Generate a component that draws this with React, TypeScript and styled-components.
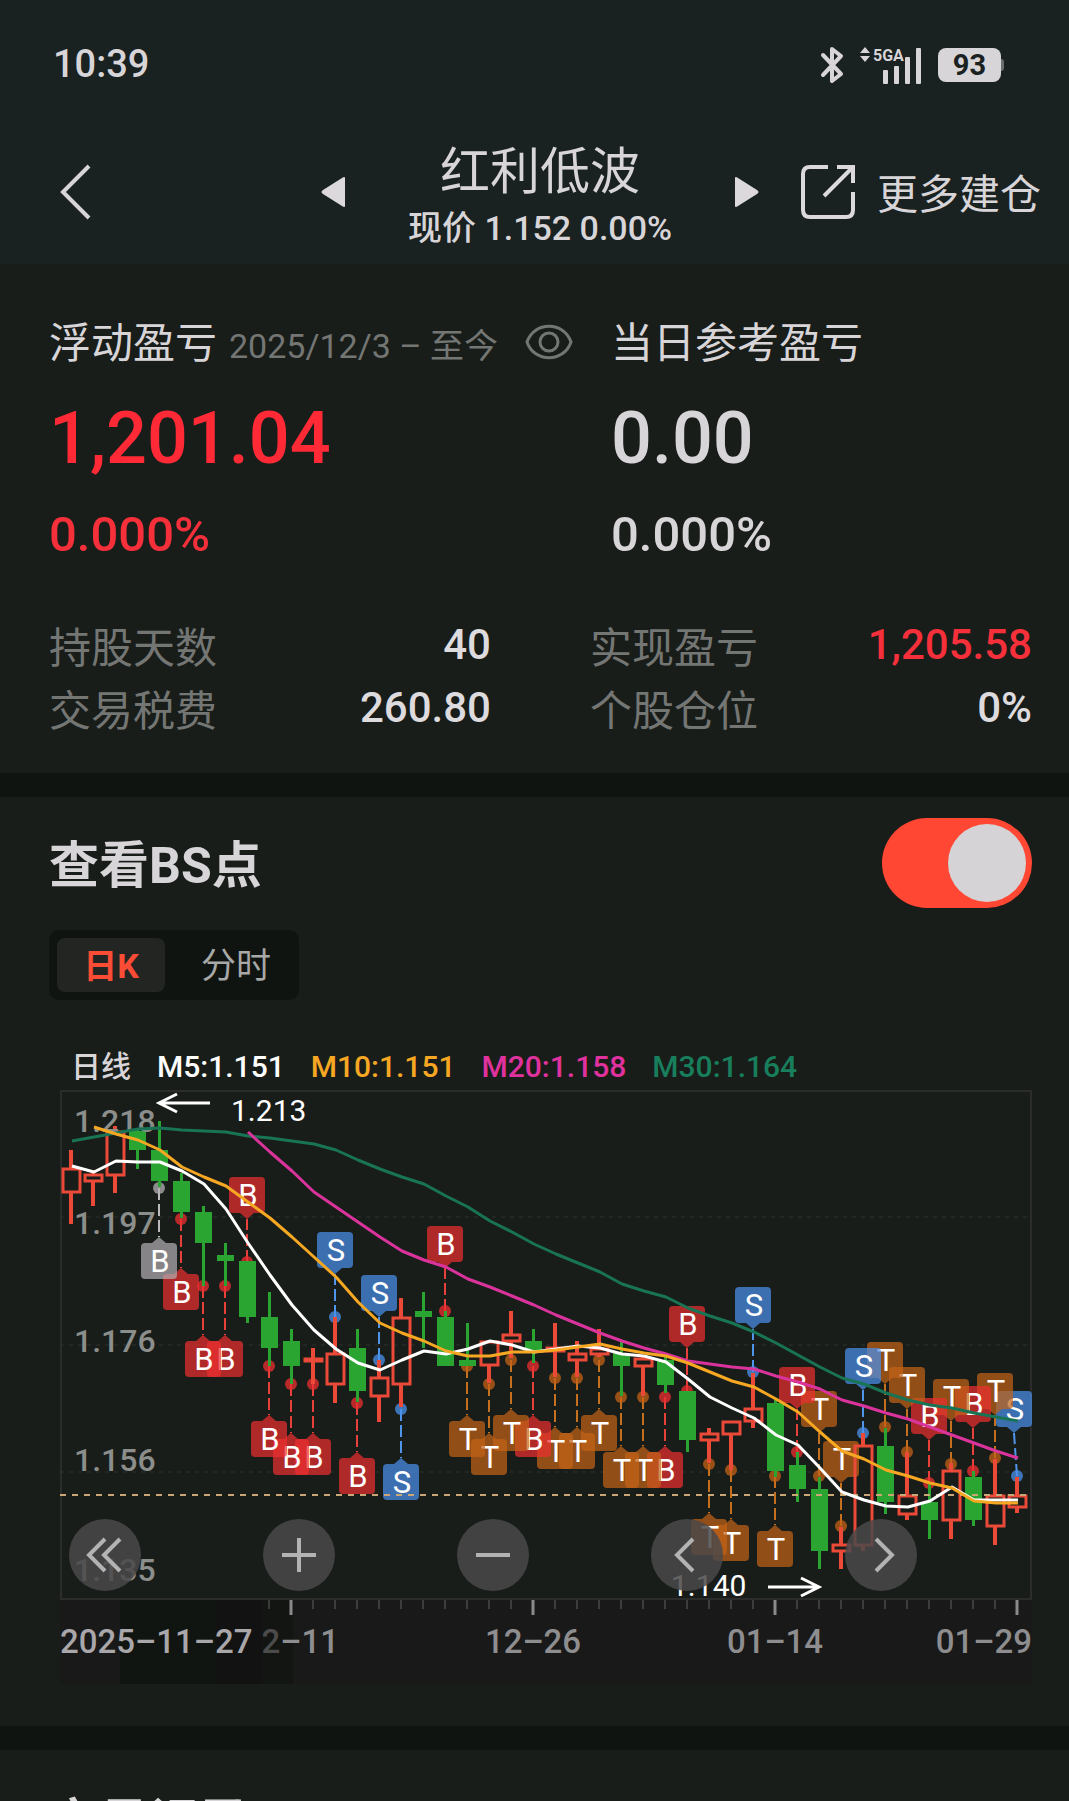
import React from "react";
import styled, { createGlobalStyle } from "styled-components";

const GlobalStyle = createGlobalStyle`
  * { box-sizing: border-box; }
  html, body { margin: 0; background: #191d1a; overflow: hidden; }
  body {
    font-family: Roboto, "Noto Sans CJK SC", sans-serif;
    color: #d8d5d8;
  }
  button { border: 0; padding: 0; background: none; color: inherit; font: inherit; cursor: pointer; }
  h1, h2, p, dl, dt, dd { margin: 0; font-weight: 400; }
  svg { display: block; flex: none; }
`;

const Top = styled.header`
  background: #1a2121;
`;

const StatusBar = styled.div`
  display: flex;
  align-items: center;
  height: 128px;
  padding: 0 65px 0 53px;
`;

const Clock = styled.time`
  flex: 1;
  font-size: 38px;
  font-weight: 500;
  line-height: 48px;
`;

const StatusIcons = styled.div`
  display: flex;
  align-items: center;
  gap: 16px;
  padding-top: 2px;
`;

const Battery = styled.span`
  display: flex;
  align-items: center;
  &::after {
    content: "";
    width: 3px;
    height: 12px;
    background: #6b6f6e;
    border-radius: 0 3px 3px 0;
  }
`;

const BatteryLevel = styled.span`
  width: 63px;
  height: 34px;
  border-radius: 8px;
  background: #d8d5d8;
  color: #1a2121;
  font-size: 29px;
  font-weight: 700;
  line-height: 35px;
  text-align: center;
`;

const NavBar = styled.nav`
  display: flex;
  align-items: center;
  height: 136px;
  padding: 0 28px 8px 60px;
`;

const IconButton = styled.button`
  display: flex;
  align-items: center;
`;

const StockSwitch = styled.div`
  display: flex;
  align-items: center;
  justify-content: space-between;
  width: 438px;
  margin: 0 42px 0 auto;
`;

const StockTitle = styled.div`
  padding-top: 8px;
  text-align: center;
`;

const StockName = styled.h1`
  font-size: 50px;
  line-height: 64px;
`;

const StockQuote = styled.p`
  font-size: 34px;
  font-weight: 500;
  line-height: 48px;
`;

const MoreButton = styled.button`
  display: flex;
  align-items: center;
  gap: 22px;
`;

const MoreLabel = styled.span`
  padding-top: 6px;
  font-size: 41px;
  line-height: 54px;
`;

const Section = styled.section<{ $top: number; $bottom: number }>`
  padding: ${(p) => p.$top}px 37px ${(p) => p.$bottom}px 49px;
  & + & { border-top: 24px solid #101410; }
`;

const Profit = styled.div`
  display: grid;
  grid-template-columns: 562fr 421fr;
`;

const ProfitHead = styled.div`
  display: flex;
  align-items: center;
  height: 48px;
  font-size: 42px;
  line-height: 48px;
  white-space: nowrap;
`;

const HeadLabel = styled.span`
  padding-top: 4px;
`;

const Period = styled.span`
  margin: 0 27px 0 12px;
  padding-top: 8px;
  color: #747674;
  font-size: 34px;
`;

const Amount = styled.p<{ $up?: boolean }>`
  margin-top: 31px;
  color: ${(p) => (p.$up ? "#ff2a36" : "#d8d5d8")};
  font-size: 72px;
  font-weight: 500;
  line-height: 84px;
`;

const Percent = styled.p<{ $up?: boolean }>`
  margin-top: 24px;
  color: ${(p) => (p.$up ? "#f5303a" : "#d8d5d8")};
  font-size: 49px;
  font-weight: 500;
  line-height: 60px;
`;

const Facts = styled.dl`
  display: grid;
  grid-template-columns: 1fr 1fr;
  column-gap: 99px;
  margin-top: 49px;
`;

const Fact = styled.div`
  display: flex;
  justify-content: space-between;
  height: 63px;
  line-height: 62px;
`;

const FactLabel = styled.dt`
  padding-top: 4px;
  color: #747674;
  font-size: 42px;
`;

const FactValue = styled.dd<{ $up?: boolean }>`
  color: ${(p) => (p.$up ? "#f5303a" : "#dedbde")};
  font-size: 42px;
  font-weight: 500;
`;

const TitleRow = styled.div`
  display: flex;
  align-items: center;
  justify-content: space-between;
  height: 90px;
`;

const SectionTitle = styled.h2`
  padding-top: 6px;
  font-size: 50px;
  font-weight: 700;
  line-height: 72px;
`;

const Toggle = styled.input`
  appearance: none;
  display: flex;
  justify-content: flex-end;
  align-items: center;
  width: 150px;
  height: 90px;
  margin: 0;
  padding: 6px;
  border-radius: 45px;
  background: #454745;
  &::before {
    content: "";
    width: 78px;
    height: 78px;
    border-radius: 50%;
    background: #d6d3d6;
  }
  &:checked { background: #ff4733; }
  &:not(:checked) { justify-content: flex-start; }
`;

const Tabs = styled.div`
  display: inline-flex;
  gap: 2px;
  margin-top: 22px;
  padding: 8px;
  border-radius: 10px;
  background: #101410;
  vertical-align: top;
`;

const Tab = styled.button<{ $active?: boolean }>`
  width: ${(p) => (p.$active ? 108 : 124)}px;
  height: 54px;
  padding: ${(p) => (p.$active ? "2px 0 0" : "4px 0 0 14px")};
  border-radius: 8px;
  background: ${(p) => (p.$active ? "#222522" : "transparent")};
  color: ${(p) => (p.$active ? "#fb4c36" : "#a7a8a7")};
  font-size: ${(p) => (p.$active ? 34 : 35)}px;
  font-weight: ${(p) => (p.$active ? 700 : 400)};
  line-height: 50px;
`;

const Legend = styled.div`
  display: flex;
  gap: 26px;
  height: 47px;
  margin: 43px 0 0 22px;
  font-size: 30px;
  font-weight: 500;
  line-height: 47px;
`;

const LegendItem = styled.span<{ $color: string }>`
  color: ${(p) => p.$color};
`;

const ChartBox = styled.div`
  position: relative;
  margin-left: 11px;
`;

const ChartSvg = styled.svg`
  width: 100%;
  height: auto;
  font-family: Roboto, sans-serif;
`;

const ChartTools = styled.div`
  position: absolute;
  left: 0;
  right: 0;
  bottom: 93px;
  display: grid;
  grid-template-columns: repeat(5, 1fr);
  padding-left: 9px;
  margin-right: -7px;
`;

const ToolButton = styled.button`
  display: grid;
  place-items: center;
  width: 72px;
  height: 72px;
  border-radius: 50%;
  background: rgba(74, 73, 74, 0.85);
`;

/* [high, body top, body bottom, low, rising] for each trading day */
const CANDLES: [number, number, number, number, 0 | 1][] = [
  [60, 78, 103, 134, 1], [80, 84, 92, 116, 1], [36, 41, 86, 103, 1], [38, 41, 60, 79, 0],
  [31, 60, 91, 97, 0], [83, 91, 122, 128, 0], [116, 122, 153, 196, 0], [153, 165, 171, 196, 0],
  [171, 171, 227, 233, 0], [202, 227, 258, 276, 0], [239, 251, 276, 294, 0], [258, 268, 272, 294, 1],
  [227, 263, 295, 313, 1], [239, 258, 301, 312, 0], [270, 287, 307, 332, 1], [208, 227, 295, 317, 1],
  [202, 221, 227, 258, 0], [221, 227, 276, 276, 0], [233, 270, 276, 276, 0], [251, 251, 276, 293, 1],
  [221, 244, 252, 268, 1], [239, 251, 261, 273, 0], [233, 257, 262, 287, 1], [251, 263, 271, 287, 1],
  [239, 258, 265, 267, 1], [252, 263, 276, 306, 0], [267, 268, 277, 306, 1], [267, 270, 295, 303, 0],
  [301, 301, 350, 362, 0], [338, 343, 351, 373, 1], [331, 331, 345, 380, 1], [283, 318, 332, 338, 1],
  [308, 313, 381, 387, 0], [362, 375, 399, 412, 0], [387, 399, 461, 479, 0], [437, 454, 462, 479, 1],
  [343, 355, 456, 461, 1], [338, 356, 412, 424, 0], [362, 405, 425, 430, 1], [394, 412, 430, 449, 0],
  [373, 380, 431, 449, 1], [381, 387, 430, 436, 0], [369, 405, 437, 455, 1], [387, 405, 418, 423, 1],
];

const AVERAGES: { color: string; from: number; values: number[] }[] = [
  {
    color: "#187455",
    from: 0,
    values: [51, 47, 43, 39, 38, 40, 41, 42, 46, 48, 51, 54, 60, 70, 79, 87, 94, 106, 117, 131, 142, 154, 164, 173, 182, 194, 201, 207, 218, 226, 233, 242, 253, 265, 277, 288, 294, 303, 310, 315, 318, 323, 327, 331],
  },
  {
    color: "#da349c",
    from: 8,
    values: [42, 62, 81, 102, 117, 132, 147, 161, 170, 177, 189, 197, 206, 215, 225, 234, 243, 251, 258, 264, 271, 274, 277, 279, 286, 292, 299, 310, 316, 323, 329, 337, 345, 353, 361, 368],
  },
  {
    color: "#ffffff",
    from: 0,
    values: [76, 82, 71, 72, 72, 81, 94, 119, 153, 185, 215, 240, 259, 273, 280, 270, 261, 264, 259, 251, 255, 262, 259, 256, 258, 264, 266, 272, 289, 307, 318, 328, 345, 355, 378, 402, 410, 416, 417, 411, 397, 410, 410, 410],
  },
  {
    color: "#f6a823",
    from: 1,
    values: [37, 44, 50, 60, 77, 87, 96, 112, 128, 147, 167, 187, 212, 233, 243, 251, 261, 266, 266, 262, 262, 260, 257, 254, 259, 263, 266, 273, 282, 291, 297, 309, 322, 342, 361, 369, 380, 386, 393, 398, 411, 413, 413],
  },
];

type Kind = "B" | "S" | "T" | "G";

/* [day, kind, dot height, 1 when the tag hangs below the dot] */
const MARKS: [number, Kind, number, 0 | 1][] = [
  [4, "G", 98, 1], [5, "B", 129, 1], [6, "B", 196, 1], [7, "B", 196, 1], [8, "B", 172, 0],
  [9, "B", 276, 1], [10, "B", 294, 1], [11, "B", 294, 1], [12, "S", 227, 0], [13, "B", 313, 1],
  [14, "S", 270, 0], [15, "S", 319, 1], [17, "B", 221, 0], [18, "T", 276, 1], [19, "T", 294, 1],
  [20, "T", 270, 1], [21, "B", 276, 1], [22, "T", 288, 1], [23, "T", 288, 1], [24, "T", 270, 1],
  [25, "T", 307, 1], [26, "T", 307, 1], [27, "B", 307, 1], [28, "B", 301, 0], [29, "T", 374, 1],
  [30, "T", 380, 1], [31, "S", 282, 0], [32, "T", 386, 1], [33, "B", 362, 0], [34, "T", 386, 0],
  [35, "T", 436, 0], [36, "S", 343, 0], [37, "T", 337, 0], [38, "T", 362, 0], [39, "B", 393, 0],
  [40, "T", 374, 0], [41, "B", 381, 0], [42, "T", 368, 0], [43, "S", 386, 0],
];

const MARK_COLORS: Record<Kind, { tag: string; line: string }> = {
  B: { tag: "#ee2e30", line: "#e8403a" },
  S: { tag: "#4a91ee", line: "#4f95ea" },
  T: { tag: "#c46216", line: "#c4701f" },
  G: { tag: "#b3afb3", line: "#bdbabd" },
};

const PRICES: [string, number][] = [
  ["1.218", 42], ["1.197", 144], ["1.176", 262], ["1.156", 381], ["1.135", 491],
];

const WIDTH = 972;
const dayX = (i: number) => 11 + i * 22;

function Candle({ day, data }: { day: number; data: [number, number, number, number, 0 | 1] }) {
  const [high, top, bottom, low, rising] = data;
  const x = dayX(day);
  if (rising) {
    return (
      <g stroke="#ec4a38" strokeWidth="4" fill="none">
        <path d={`M${x} ${high}V${top}M${x} ${bottom}V${low}`} />
        <rect x={x - 8} y={top + 1} width="17" height={Math.max(bottom - top - 2, 1)} strokeWidth="3" />
      </g>
    );
  }
  return (
    <g fill="#2aa532">
      <rect x={x - 1} y={high} width="3" height={low - high} />
      <rect x={x - 8} y={top} width="17" height={bottom - top} />
    </g>
  );
}

function Mark({ day, kind, dot, below }: { day: number; kind: Kind; dot: number; below: boolean }) {
  const x = dayX(day);
  const cx = Math.min(x, WIDTH - 18);
  const top = below ? dot + 55 : dot - 85;
  const tip = below ? top - 6 : top + 42;
  const base = below ? top : top + 36;
  const c = MARK_COLORS[kind];
  return (
    <g>
      <path d={`M${x} ${dot}L${cx} ${tip}`} stroke={c.line} strokeWidth="2" strokeDasharray="12 4" />
      <circle cx={x} cy={dot} r="6" fill={c.tag} fillOpacity="0.75" />
      <g fill={c.tag} fillOpacity="0.71">
        <path d={`M${cx - 7} ${base}L${cx} ${tip}L${cx + 7} ${base}Z`} />
        <rect x={cx - 18} y={top} width="36" height="36" rx="4" />
      </g>
      <text x={cx + 1} y={top + 29} textAnchor="middle" fontSize="31" fill="#fff">
        {kind === "G" ? "B" : kind}
      </text>
    </g>
  );
}

function Chart() {
  return (
    <ChartSvg viewBox="0 0 972 594" role="img" aria-label="日线">
      <rect y="510" width="972" height="84" fill="#191919" />
      <rect x="60" y="510" width="96" height="84" fill="#111511" />
      <rect x="156" y="510" width="46" height="84" fill="#121212" />
      <rect x="202" y="510" width="31" height="84" fill="#121512" />
      <rect x="1" y="1" width="970" height="508" fill="none" stroke="#2b2c2b" strokeWidth="2" />
      <path d="M0 127H972M0 255H972M0 382H972" stroke="#2f322f" strokeDasharray="4 5" />

      {[...MARKS].reverse().map(([day, kind, dot, below]) => (
        <Mark key={day} day={day} kind={kind} dot={dot} below={below === 1} />
      ))}
      {CANDLES.map((c, i) => (
        <Candle key={i} day={i} data={c} />
      ))}
      <path d="M0 405H972" stroke="#c9a875" strokeWidth="2" strokeDasharray="6 6" />

      {PRICES.map(([label, y]) => (
        <text key={label} x="14" y={y} fontSize="32" fontWeight="500" fill="#8c8e8c">
          {label}
        </text>
      ))}

      {AVERAGES.map(({ color, from, values }) => (
        <polyline
          key={color}
          points={values.map((v, i) => `${dayX(i + from) + 1},${v}`).join(" ")}
          fill="none"
          stroke={color}
          strokeWidth="3"
          strokeLinejoin="round"
        />
      ))}

      <g fontSize="30" fill="#fff">
        <text x="171" y="31">1.213</text>
        <text x="611" y="506">1.140</text>
      </g>
      <g fill="none" stroke="#fff" strokeWidth="3">
        <path d="M150 13H99M117 4L99 13L117 22" />
        <path d="M708 497H759M741 488L759 497L741 506" />
      </g>

      {CANDLES.map((_, i) =>
        i < 9 ? null : i % 11 === 10 ? (
          <path key={i} d={`M${dayX(i)} 510V525`} stroke="#8a8a8a" strokeWidth="3" />
        ) : (
          <path key={i} d={`M${dayX(i)} 510V519`} stroke="#626262" strokeWidth="1" />
        )
      )}
      <g fontSize="33" fontWeight="500" fill="#8e8d8f">
        <text x="0" y="563" fill="#a9a7aa">2025–11–27</text>
        <text x="279" y="563" textAnchor="end">
          <tspan fill="#4a4b4a">2</tspan>–11
        </text>
        <text x="473" y="563" textAnchor="middle">12–26</text>
        <text x="715" y="563" textAnchor="middle">01–14</text>
        <text x="972" y="563" textAnchor="end">01–29</text>
      </g>
    </ChartSvg>
  );
}

const TOOLS = [
  { name: "最早", path: "M36 20L20 36L36 52M51 20L35 36L51 52" },
  { name: "放大", path: "M36 19V53M19 36H53" },
  { name: "缩小", path: "M19 36H53" },
  { name: "向左", path: "M42 20L26 36L42 52" },
  { name: "向右", path: "M31 20L47 36L31 52" },
];

const FACTS = [
  { label: "持股天数", value: "40" },
  { label: "实现盈亏", value: "1,205.58", up: true },
  { label: "交易税费", value: "260.80" },
  { label: "个股仓位", value: "0%" },
];

export default function App() {
  return (
    <>
      <GlobalStyle />
      <Top>
        <StatusBar>
          <Clock>10:39</Clock>
          <StatusIcons>
            <svg width="24" height="38" viewBox="0 0 24 38" fill="none" stroke="#d8d5d8" strokeWidth="4" strokeLinejoin="round" strokeLinecap="round">
              <path d="M3 9L21 28L12 35V3L21 10L3 29" />
            </svg>
            <svg width="62" height="38" viewBox="0 0 62 38" fill="#d8d5d8">
              <path d="M0 7L5 1L10 7ZM0 10L5 16L10 10Z" />
              <text x="13" y="15" fontSize="16" fontWeight="700" fontFamily="Roboto, sans-serif">
                5GA
              </text>
              <rect x="23" y="24" width="5" height="14" rx="1" />
              <rect x="34" y="20" width="5" height="18" rx="1" />
              <rect x="45" y="11" width="5" height="27" rx="1" />
              <rect x="56" y="2" width="5" height="36" rx="1" />
            </svg>
            <Battery>
              <BatteryLevel>93</BatteryLevel>
            </Battery>
          </StatusIcons>
        </StatusBar>
        <NavBar>
          <IconButton aria-label="返回">
            <svg width="32" height="56" viewBox="0 0 32 56" fill="none" stroke="#d8d5d8" strokeWidth="4">
              <path d="M29 2L3 28L29 54" />
            </svg>
          </IconButton>
          <StockSwitch>
            <IconButton aria-label="上一只">
              <svg width="24" height="32" viewBox="0 0 24 32" fill="#dcd9dc">
                <path d="M24 2V30Q24 32 21 30L2 18Q-1 16 2 14L21 2Q24 0 24 2Z" />
              </svg>
            </IconButton>
            <StockTitle>
              <StockName>红利低波</StockName>
              <StockQuote>现价 1.152 0.00%</StockQuote>
            </StockTitle>
            <IconButton aria-label="下一只">
              <svg width="24" height="32" viewBox="0 0 24 32" fill="#dcd9dc">
                <path d="M0 2V30Q0 32 3 30L22 18Q25 16 22 14L3 2Q0 0 0 2Z" />
              </svg>
            </IconButton>
          </StockSwitch>
          <MoreButton>
            <svg width="54" height="54" viewBox="0 0 54 54" fill="none" stroke="#dcd9dc" strokeWidth="4">
              <path d="M27 2H9Q2 2 2 9V45Q2 52 9 52H45Q52 52 52 45V27M36 2H52V18M52 2L23 31" />
            </svg>
            <MoreLabel>更多建仓</MoreLabel>
          </MoreButton>
        </NavBar>
      </Top>

      <main>
        <Section $top={54} $bottom={33}>
          <Profit>
            <div>
              <ProfitHead>
                <HeadLabel>浮动盈亏</HeadLabel>
                <Period>2025/12/3 – 至今</Period>
                <IconButton aria-label="隐藏金额">
                  <svg width="48" height="36" viewBox="0 0 48 36" fill="none" stroke="#747674" strokeWidth="3">
                    <path d="M2 18C9 -3 39 -3 46 18C39 39 9 39 2 18Z" />
                    <circle cx="24" cy="18" r="9" />
                  </svg>
                </IconButton>
              </ProfitHead>
              <Amount $up>1,201.04</Amount>
              <Percent $up>0.000%</Percent>
            </div>
            <div>
              <ProfitHead>
                <HeadLabel>当日参考盈亏</HeadLabel>
              </ProfitHead>
              <Amount>0.00</Amount>
              <Percent>0.000%</Percent>
            </div>
          </Profit>
          <Facts>
            {FACTS.map((f) => (
              <Fact key={f.label}>
                <FactLabel>{f.label}</FactLabel>
                <FactValue $up={f.up}>{f.value}</FactValue>
              </Fact>
            ))}
          </Facts>
        </Section>

        <Section $top={21} $bottom={42}>
          <TitleRow>
            <SectionTitle>
              <label htmlFor="bs-points">查看BS点</label>
            </SectionTitle>
            <Toggle id="bs-points" type="checkbox" role="switch" defaultChecked />
          </TitleRow>
          <Tabs role="tablist">
            <Tab role="tab" aria-selected="true" $active>日K</Tab>
            <Tab role="tab" aria-selected="false">分时</Tab>
          </Tabs>
          <Legend>
            <LegendItem $color="#d8d5d8">日线</LegendItem>
            <LegendItem $color="#ffffff">M5:1.151</LegendItem>
            <LegendItem $color="#f6a823">M10:1.151</LegendItem>
            <LegendItem $color="#e0329f">M20:1.158</LegendItem>
            <LegendItem $color="#187f5c">M30:1.164</LegendItem>
          </Legend>
          <ChartBox>
            <Chart />
            <ChartTools>
              {TOOLS.map((t) => (
                <ToolButton key={t.name} aria-label={t.name}>
                  <svg width="72" height="72" viewBox="0 0 72 72" fill="none" stroke="#b4b3b4" strokeWidth="4">
                    <path d={t.path} />
                  </svg>
                </ToolButton>
              ))}
            </ChartTools>
          </ChartBox>
        </Section>

        <Section $top={31} $bottom={36}>
          <SectionTitle>交易记录</SectionTitle>
        </Section>
      </main>
    </>
  );
}
